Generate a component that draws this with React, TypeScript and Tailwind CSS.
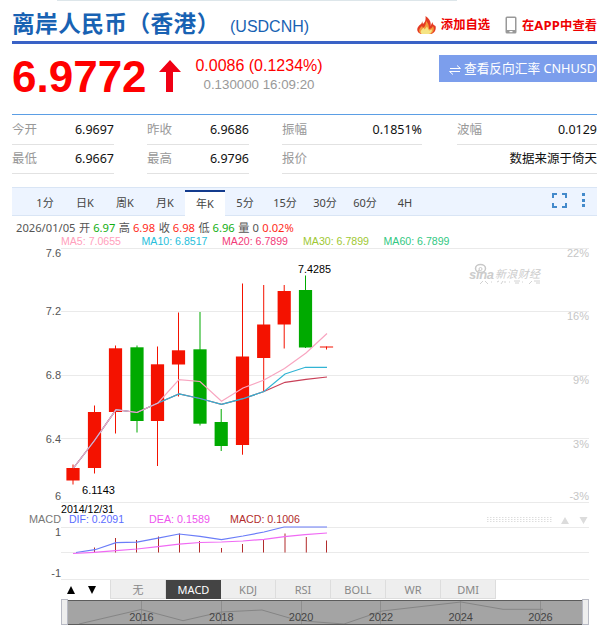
import type { ReactNode } from "react";

const UI_FONT = "font-['Noto_Sans','Noto_Sans_CJK_SC',sans-serif]";
const ARIAL = "font-['Liberation_Sans','Noto_Sans_CJK_SC',sans-serif]";

const RED = "#f41200";
const GREEN = "#00aa00";

const tabs = [
  { label: "1分" },
  { label: "日K" },
  { label: "周K" },
  { label: "月K" },
  { label: "年K", active: true },
  { label: "5分" },
  { label: "15分" },
  { label: "30分" },
  { label: "60分" },
  { label: "4H" },
];

const indicators = ["无", "MACD", "KDJ", "RSI", "BOLL", "WR", "DMI"];

// x, body top, body bottom, wick top, wick bottom
const candles = [
  { x: 73, top: 468, bottom: 480.5, high: 464.5, low: 484.5, up: true },
  { x: 94.5, top: 412, bottom: 468, high: 405.5, low: 473.5, up: true },
  { x: 115.5, top: 348.3, bottom: 412, high: 345.5, low: 433.5, up: true },
  { x: 137, top: 347.3, bottom: 421, high: 345.5, low: 432.5, up: false },
  { x: 157.5, top: 364.3, bottom: 421, high: 346.5, low: 466, up: true },
  { x: 178.5, top: 350.3, bottom: 364.5, high: 312.5, low: 396.5, up: true },
  { x: 200, top: 349.3, bottom: 423.7, high: 312, low: 425.5, up: false },
  { x: 221.2, top: 422, bottom: 446, high: 409, low: 451, up: false },
  { x: 242.5, top: 356.5, bottom: 445, high: 283.5, low: 454.7, up: true },
  { x: 263.7, top: 324.5, bottom: 358, high: 285, low: 391, up: true },
  { x: 284.2, top: 291, bottom: 324.5, high: 285, low: 348.5, up: true },
  { x: 305.5, top: 290, bottom: 347.5, high: 275.5, low: 348, up: false },
  { x: 326.5, top: 346.5, bottom: 347.5, high: 346.5, low: 349.5, up: true },
];

const macdBars = [
  [94.5, 547.5],
  [115.5, 538],
  [136.5, 540],
  [158.5, 536.5],
  [179.5, 533.5],
  [199.5, 541],
  [221.5, 548],
  [242.5, 544],
  [263.5, 539.5],
  [285, 533.5],
  [306.3, 537],
  [326.5, 540.5],
];

const MA5 =
  "73.5,468 94.5,440.5 116,409.7 137,412.5 158,403 179,379.7 200,381.5 221.5,401.3 243,388 264,380 284.5,368.5 306,353 327,333.5";
const MA10 =
  "73.5,468 94.5,440.5 116,409.7 137,412.5 158,403 179,394 200,398.5 221.5,404.4 243,398.7 264,391.5 285,374 305.5,367.3 327,367.3";
const MA20 =
  "73.5,468 94.5,440.5 116,409.7 137,412.5 158,403 179,394 200,398.5 221.5,404.4 243,398.7 264,391.5 285,382.3 306,379.3 327,377";
const DIF =
  "76,552.5 95,549.7 116,542.7 137,542.2 158,538.2 179,534 200,536.3 221.5,539.6 243,536 264,532 284,527 327,527";
const DEA =
  "73,553.5 94,552.3 116,550.7 137,549 158,546.7 179,544.2 200,542.5 221.5,542 243,541 264,539.3 284.5,536.7 305,534.7 327,533";
const NAVIGATOR =
  "79,624 141,609.5 183,620.7 221,612 262,610 293,619 310,621.5 344,624 382,611 461,602 503,609.3 543,609.3";

const FlameIcon = () => (
  <svg className="w-[19px] h-[18px]" viewBox="0 0 19 18">
    <path
      d="M2 17C-1 14 0 11 4 8c1-1 1-2 1-3l1 3C8 6 9 4 8.500 0c4 3 6 6 5 10l2-4c0 2 1 3 3 4 1 4-1 7-4 8H4z"
      fill="#e43a22"
    />
    <path
      d="M3 17C1 14 3 12 5 10l1 2c2-1 3-4 3-7 3 3 3 6 3 8 2 0 3-1 4-3 2 4 0 6-2 8H5z"
      fill="#f59a3d"
    />
    <path d="M4 17.500c-1-3 1-4 3-6v2c2-1 2-2 3-3l2 4 3-1c0 2-1 4-3 4.500H5z" fill="#f5e484" />
  </svg>
);

const PhoneIcon = () => (
  <svg className="w-[12px] h-[18px]" viewBox="0 0 12 18">
    <rect x="0.500" y="0.500" width="11" height="17" rx="1.500" fill="#999" />
    <rect x="2" y="2" width="8" height="12" fill="#fff" />
    <rect x="4.500" y="15" width="3" height="1.200" fill="#fff" />
  </svg>
);

interface StatProps {
  label: string;
  value?: string;
  width: string;
}

const Stat = ({ label, value, width }: StatProps) => (
  <div
    className={`${width} h-[29px] shrink-0 border-b border-[#e2e2e2] flex items-center justify-between pt-px text-[12.500px] text-[#111]`}>
    <span className="text-[#999]">{label}</span>
    <span>{value}</span>
  </div>
);

interface LabelProps {
  x: number;
  y: number;
  width?: number;
  fill?: string;
  anchor?: "start" | "middle" | "end";
  size?: number;
  children: ReactNode;
}

const Label = ({ x, y, width, fill = "#555", anchor = "start", size = 11, children }: LabelProps) => (
  <text
    x={x}
    y={y}
    fill={fill}
    fontSize={size}
    textAnchor={anchor}
    textLength={width}
    lengthAdjust="spacingAndGlyphs">
    {children}
  </text>
);

const Header = () => (
  <div className="h-[44px] border-b-[3px] border-[#3a62c6] flex justify-between">
    <div className="flex text-[#1862b3]">
      <h1 className="w-[204px] pt-[8px] text-[22.700px] leading-[32px] font-bold tracking-[0.400px] whitespace-nowrap">
        离岸人民币（香港）
      </h1>
      <span className={`${ARIAL} ml-[14px] pt-[17px] text-[16px] leading-[20px]`}>
        (USDCNH)
      </span>
    </div>
    <div className="flex pt-[16px] text-[12.300px] leading-[18px] font-bold text-[#ee0000] whitespace-nowrap">
      <FlameIcon />
      <span className="ml-[5px]">添加自选</span>
      <span className="ml-[15px]">
        <PhoneIcon />
      </span>
      <span className="ml-[5px]">
        在<span className="text-[13px] tracking-[0.200px]">APP</span>中查看
      </span>
    </div>
  </div>
);

const Price = () => (
  <div className={`${ARIAL} h-[70px] flex`}>
    <div className="w-[140px] pt-[9px] text-[44px] leading-[48px] font-bold text-[#ff0000]">
      6.9772
    </div>
    <svg className="w-[22px] h-[33px] mt-[16px] ml-[7px]" viewBox="0 0 22 33">
      <path d="M11 0L22 12H14V32H7V12H0Z" fill="#f00014" />
    </svg>
    <div className="ml-[12px] w-[132px] pt-[12px] text-center whitespace-nowrap">
      <div className="text-[16px] leading-[20px] text-[#ff0000]">0.0086 (0.1234%)</div>
      <div className="text-[13.300px] leading-[18px] text-[#999]">0.130000 16:09:20</div>
    </div>
    <div
      className={`${UI_FONT} ml-auto mt-[11px] w-[158px] h-[27px] bg-[#7c9eec] text-white flex items-center pl-[10px] text-[12.700px] whitespace-nowrap`}>
      <svg className="w-[12px] h-[12px] mt-[3px] mr-[3px]" viewBox="0 0 12 12" fill="none" stroke="#fff">
        <path d="M1 4.500H11.500L8 1.500M11 7.500H0.500L4 10.500" />
      </svg>
      查看反向汇率 CNHUSD
    </div>
  </div>
);

const TabBar = () => (
  <div className="h-[29px] mt-[13px] flex bg-[#edf4ff] border-t border-b border-[#d9e5f5] pl-[13px] text-[11px] text-[#444]">
    {tabs.map((tab) => (
      <div
        key={tab.label}
        className={
          tab.active
            ? "w-[40px] h-[27px] mt-[2px] bg-white border-t-2 border-[#133b8d] flex items-center justify-center"
            : "w-[40px] flex items-center justify-center pt-[3px]"
        }>
        {tab.label}
      </div>
    ))}
    <div className="ml-auto flex pt-[5px] pr-[12px] gap-[15px]">
      <svg className="w-[15px] h-[15px]" viewBox="0 0 15 15" fill="none" stroke="#438acb" strokeWidth="2">
        <path d="M1 5V1H5M10 1H14V5M14 10V14H10M5 14H1V10" />
      </svg>
      <svg className="w-[3px] h-[15px]" viewBox="0 0 3 15" fill="#438acb">
        <path d="M0 0H3V3H0ZM0 6H3V9H0ZM0 11H3V14H0Z" />
      </svg>
    </div>
  </div>
);

const Watermark = () => (
  <g fill="#cccccc">
    <g fill="none" stroke="#c8c8c8">
      <ellipse cx="480.500" cy="268.500" rx="5" ry="4" strokeWidth="1.500" />
      <circle cx="480.500" cy="269" r="1.500" />
    </g>
    <text x="469" y="279" fontSize="13" fontWeight="bold" fontStyle="italic" textLength="25">
      sina
    </text>
    <text x="495" y="278" fontSize="11" fontStyle="italic" textLength="45">
      新浪财经
    </text>
    <path
      d="M480 284l3-3M485 281l3 3M491 282h1M497 282l2-1M501 284l2-3M505 281v2M509 282h1M514 281h6M515 283h4M522 282h1M529 284l3-3M534 281h6M536 283h4"
      stroke="#d2d2d2"
      fill="none"
    />
  </g>
);

const KLineChart = () => (
  <svg className={`${ARIAL} block w-[600px] h-[332px] -ml-[12px]`} viewBox="0 248 600 332">
    <g stroke="#eaeaea">
      {[248.5, 311.5, 375.5, 438.5, 502.5, 527.5, 552.5, 579.5].map((y) => (
        <line key={y} x1="61" x2="589" y1={y} y2={y} />
      ))}
    </g>
    <Watermark />

    {candles.map((c) => (
      <g key={c.x} fill={c.up ? RED : GREEN}>
        <rect x={c.x - 0.5} y={c.high} width="1" height={c.low - c.high} />
        <rect x={c.x - 6.6} y={c.top} width="13.200" height={c.bottom - c.top} />
      </g>
    ))}
    <g fill="none" strokeWidth="1.200">
      <polyline points={MA20} stroke="#c94058" />
      <polyline points={MA10} stroke="#32b4d4" />
      <polyline points={MA5} stroke="#f8a5c0" />
    </g>

    <Label x={61} y={257} anchor="end">7.6</Label>
    <Label x={61} y={315} anchor="end">7.2</Label>
    <Label x={61} y={379} anchor="end">6.8</Label>
    <Label x={61} y={442.500} anchor="end">6.4</Label>
    <Label x={61} y={500} anchor="end">6</Label>
    <Label x={589} y={257} anchor="end" fill="#c6c6c6">22%</Label>
    <Label x={589} y={320} anchor="end" fill="#c6c6c6">16%</Label>
    <Label x={589} y={384} anchor="end" fill="#c6c6c6">9%</Label>
    <Label x={589} y={448} anchor="end" fill="#c6c6c6">3%</Label>
    <Label x={589} y={500} anchor="end" fill="#c6c6c6">-3%</Label>
    <Label x={298} y={273} width={33} fill="#000">7.4285</Label>
    <Label x={82} y={494} width={33} fill="#000">6.1143</Label>
    <Label x={61} y={513} width={53} fill="#000">2014/12/31</Label>

    <Label x={29} y={523} width={32} fill="#777">MACD</Label>
    <Label x={69} y={523} width={55} fill="#5b6cff">DIF: 0.2091</Label>
    <Label x={149} y={523} width={61} fill="#ee55ee">DEA: 0.1589</Label>
    <Label x={230} y={523} width={70} fill="#b22c2c">MACD: 0.1006</Label>
    <Label x={61} y={536} anchor="end">1</Label>
    <Label x={61} y={577} anchor="end">-1</Label>

    {macdBars.map(([x, y]) => (
      <rect key={x} x={x - 0.5} y={y} width="1" height={552.5 - y} fill="#b22c2c" />
    ))}
    <polyline points={DIF} fill="none" stroke="#6b7df8" strokeWidth="1.200" />
    <polyline points={DEA} fill="none" stroke="#f06af4" strokeWidth="1.200" />

    <g stroke="#dedede" strokeWidth="1" strokeDasharray="1.500 1.500">
      <line x1="487" x2="553" y1="517.500" y2="517.500" />
      <line x1="487" x2="553" y1="519.500" y2="519.500" />
      <line x1="487" x2="553" y1="521.500" y2="521.500" />
    </g>
    <path d="M561 524L565 517L569 524ZM579.500 517H587.500L583.500 524Z" fill="#dcdcdc" />
  </svg>
);

const IndicatorBar = () => (
  <div className="h-[19px] flex text-[11px] leading-[19px] text-[#888] pl-[49px]">
    <div className="w-[19px] flex items-center justify-center">
      <svg className="w-[8px] h-[8px]" viewBox="0 0 8 8">
        <path d="M4 0L8 8H0Z" />
      </svg>
    </div>
    <div className="w-[19px] ml-[2px] flex items-center justify-center">
      <svg className="w-[8px] h-[8px]" viewBox="0 0 8 8">
        <path d="M0 0H8L4 8Z" />
      </svg>
    </div>
    <div className="ml-[9px] flex border-l border-[#dddddd]">
      {indicators.map((name) => (
        <div
          key={name}
          className={
            name === "MACD"
              ? "w-[55px] text-center bg-[#444444] text-white"
              : "w-[55px] text-center bg-[#eeeeee] border-r border-b border-[#dddddd]"
          }>
          {name}
        </div>
      ))}
    </div>
  </div>
);

const Navigator = () => (
  <svg className={`${ARIAL} block w-[600px] h-[28px] -ml-[12px]`} viewBox="0 599 600 28">
    <rect x="67" y="600" width="516" height="25" fill="#a4a4a4" />
    <g stroke="#8e8e8e">
      {[141.5, 221.5, 301.5, 380.5, 460.5, 540.5].map((x) => (
        <line key={x} x1={x} x2={x} y1="600" y2="625" />
      ))}
    </g>
    <polyline points={NAVIGATOR} fill="none" stroke="#858585" />
    <path d="M62 600.500H588M62 624.500H588" stroke="#5c5c5c" />
    <g fill="#eeeeee" stroke="#b8bac4">
      <rect x="61.500" y="599.500" width="6" height="25" />
      <rect x="582.500" y="599.500" width="6" height="25" />
    </g>
    {["2016", "2018", "2020", "2022", "2024", "2026"].map((year, i) => (
      <Label key={year} x={141.5 + i * 79.8} y={621} anchor="middle" size={11} fill="#444">
        {year}
      </Label>
    ))}
  </svg>
);

export default function App() {
  return (
    <div className={`${UI_FONT} w-[600px] h-[633px] bg-white overflow-hidden`}>
      <div className="absolute left-[57px] top-0 w-[400px] h-px bg-[#dde6ea]" />
      <div className="ml-[12px] w-[585px]">
        <Header />
        <Price />
        <div className="border-t border-[#5b9ee5] pt-px">
          <div className="flex">
            <Stat label="今开" value="6.9697" width="w-[102px]" />
            <div className="ml-[33px]">
              <Stat label="昨收" value="6.9686" width="w-[102px]" />
            </div>
            <div className="ml-[33px]">
              <Stat label="振幅" value="0.1851%" width="w-[140px]" />
            </div>
            <div className="ml-[35px]">
              <Stat label="波幅" value="0.0129" width="w-[140px]" />
            </div>
          </div>
          <div className="flex">
            <Stat label="最低" value="6.9667" width="w-[102px]" />
            <div className="ml-[33px]">
              <Stat label="最高" value="6.9796" width="w-[102px]" />
            </div>
            <div className="ml-[33px]">
              <Stat label="报价" value="数据来源于倚天" width="w-[315px]" />
            </div>
          </div>
        </div>
        <TabBar />

        <div className="h-[20px] pt-[4px] pl-[4px] flex gap-[3.500px] text-[11.200px] leading-[15px] text-[#555] whitespace-nowrap">
          <span>2026/01/05</span>
          <span>开 <b className="font-normal text-[#12ae12]">6.97</b></span>
          <span>高 <b className="font-normal text-[#ff2a1a]">6.98</b></span>
          <span>收 <b className="font-normal text-[#ff2a1a]">6.98</b></span>
          <span>低 <b className="font-normal text-[#12ae12]">6.96</b></span>
          <span>量 0</span>
          <span className="text-[#ff2a1a]">0.02%</span>
        </div>
        <svg className={`${ARIAL} block w-[585px] h-[12px]`} viewBox="12 236 585 12">
          <Label x={61} y={245} width={60} fill="#ffa0bc">MA5: 7.0655</Label>
          <Label x={141.500} y={245} width={66} fill="#26bedb">MA10: 6.8517</Label>
          <Label x={222} y={245} width={66} fill="#f23a78">MA20: 6.7899</Label>
          <Label x={303} y={245} width={66} fill="#a0c832">MA30: 6.7899</Label>
          <Label x={383.500} y={245} width={66} fill="#32c882">MA60: 6.7899</Label>
        </svg>
        <KLineChart />
        <IndicatorBar />
        <Navigator />
      </div>
    </div>
  );
}
